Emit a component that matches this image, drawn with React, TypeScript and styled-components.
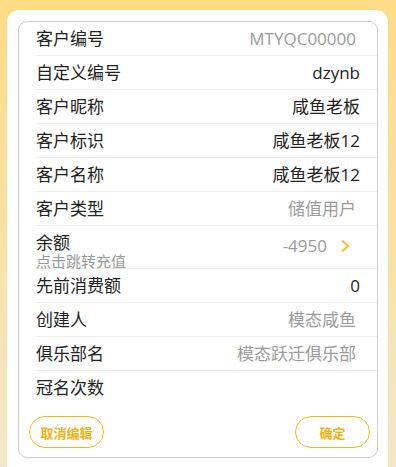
import React from "react";
import styled, { createGlobalStyle } from "styled-components";

const GlobalStyle = createGlobalStyle`
  html, body {
    margin: 0;
    padding: 0;
    height: 100%;
  }
  body {
    font-family: "Open Sans", "Noto Sans CJK SC", sans-serif;
    background: linear-gradient(to bottom, #fedc84 0%, #f8e2a8 55%, #f2e7c9 100%);
    overflow: hidden;
  }
`;

const Page = styled.div`
  width: 396px;
  height: 467px;
  box-sizing: border-box;
  padding: 10px 8px 0 7px;
`;

const Sheet = styled.div`
  background: #fff;
  border-radius: 12px 12px 0 0;
  height: 100%;
  box-sizing: border-box;
  padding: 11px 10px 0 11px;
`;

const Card = styled.div`
  border: 1px solid #cfcfcf;
  border-radius: 9px;
  padding: 0 0 10px 17px;
  height: 437px;
  box-sizing: border-box;
`;

const Row = styled.div<{ $tall?: boolean; $last?: boolean }>`
  display: flex;
  align-items: ${(p) => (p.$tall ? "flex-start" : "center")};
  justify-content: space-between;
  height: ${(p) => (p.$tall ? 43 : 34)}px;
  box-sizing: border-box;
  padding-right: 17px;
  border-bottom: ${(p) => (p.$last ? "none" : "1px solid #eeeeee")};
  font-size: 17px;
  line-height: 22px;
  padding-top: ${(p) => (p.$tall ? 7 : 0)}px;
`;

const LabelBox = styled.div`
  display: flex;
  flex-direction: column;
  gap: 2px;
  line-height: 19px;
`;

const Label = styled.span`
  color: #222;
`;

const Hint = styled.span`
  font-size: 15px;
  line-height: 14px;
  color: #999;
`;

const Value = styled.span<{ $muted?: boolean; $link?: boolean }>`
  color: ${(p) => (p.$muted ? "#9b9b9b" : "#222")};
  display: flex;
  align-items: center;
  gap: 13px;
  padding-right: ${(p) => (p.$link ? 10 : p.$muted ? 4 : 0)}px;
  margin-top: ${(p) => (p.$link ? 2 : 0)}px;
`;

const Actions = styled.div`
  display: flex;
  justify-content: space-between;
  padding-top: 11px;
  margin-left: -7px;
  margin-right: 7px;
`;

const Pill = styled.button`
  width: 75px;
  height: 32px;
  border-radius: 16px;
  border: 1px solid #f3b816;
  background: #fff;
  color: #f0b213;
  font-family: "Noto Sans CJK SC", sans-serif;
  font-weight: 700;
  font-size: 13px;
  padding: 0;
`;

const Chevron = () => (
  <svg width="10" height="14" viewBox="0 0 10 14">
    <path d="M2 1.5 L8 7 L2 12.5" fill="none" stroke="#fbbd2b" strokeWidth="2" />
  </svg>
);

type Item = { label: string; value: string; muted?: boolean };

const items: Item[] = [
  { label: "客户编号", value: "MTYQC00000", muted: true },
  { label: "自定义编号", value: "dzynb" },
  { label: "客户昵称", value: "咸鱼老板" },
  { label: "客户标识", value: "咸鱼老板12" },
  { label: "客户名称", value: "咸鱼老板12" },
  { label: "客户类型", value: "储值用户", muted: true },
];

const after: Item[] = [
  { label: "先前消费额", value: "0" },
  { label: "创建人", value: "模态咸鱼", muted: true },
  { label: "俱乐部名", value: "模态跃迁俱乐部", muted: true },
  { label: "冠名次数", value: "" },
];

export default function App() {
  return (
    <>
      <GlobalStyle />
      <Page>
        <Sheet>
          <Card>
            {items.map((it) => (
              <Row key={it.label}>
                <Label>{it.label}</Label>
                <Value $muted={it.muted}>{it.value}</Value>
              </Row>
            ))}
            <Row $tall>
              <LabelBox>
                <Label>余额</Label>
                <Hint>点击跳转充值</Hint>
              </LabelBox>
              <Value $muted $link>
                -4950
                <Chevron />
              </Value>
            </Row>
            {after.map((it, i) => (
              <Row key={it.label} $last={i === after.length - 1}>
                <Label>{it.label}</Label>
                <Value $muted={it.muted}>{it.value}</Value>
              </Row>
            ))}
            <Actions>
              <Pill>取消编辑</Pill>
              <Pill>确定</Pill>
            </Actions>
          </Card>
        </Sheet>
      </Page>
    </>
  );
}
